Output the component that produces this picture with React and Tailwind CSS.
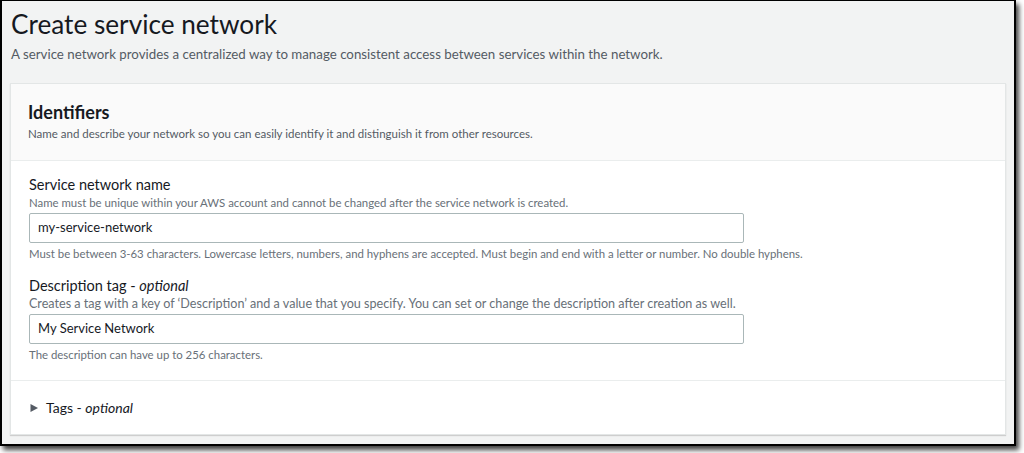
import React from 'react';

const font = { fontFamily: 'Lato, "Open Sans", Arial, sans-serif' };

const Field = ({ label, optional, hint, hintSize, value, note }) => (
  <div className="flex flex-col">
    <div className="text-[14.5px] leading-[18px] text-[#16191f]">
      {label}
      {optional && (
        <>
          {' - '}
          <i>optional</i>
        </>
      )}
    </div>
    <div className={`${hintSize} leading-[16px] text-[#687078] mt-[1px]`}>{hint}</div>
    <div className="mt-[2px] w-[715px] h-[30px] border border-[#aab7b8] rounded-[2px] bg-white px-[8px] flex items-center text-[13px] text-[#16191f]">
      {value}
    </div>
    <div className="text-[11.4px] leading-[16px] text-[#687078] mt-[3px]">{note}</div>
  </div>
);

export default function App() {
  return (
    <div className="w-[1024px] h-[453px] bg-white" style={font}>
      <div className="w-[1016px] h-[446px] border-2 border-t border-black bg-[#f2f3f3] shadow-[3px_4px_5px_rgba(0,0,0,0.75)] px-[8px] flex flex-col">
        <h1 className="text-[26.2px] leading-[34px] text-[#16191f] pl-[1px] mt-[6px]">Create service network</h1>
        <p className="text-[13.3px] leading-[20px] text-[#545b64] pl-[1px] mt-[3px]">
          A service network provides a centralized way to manage consistent access between services within the network.
        </p>
        <div className="mt-[19px] w-[996px] h-[352px] bg-white border border-[#e3e6e6] shadow-[0_1px_1px_rgba(0,0,0,0.15)] flex flex-col">
          <div className="bg-[#fafafa] border-b border-[#eaeded] h-[77px] px-[17px] pt-[17px]">
            <h2 className="text-[18px] leading-[22px] font-bold text-[#16191f]">Identifiers</h2>
            <p className="text-[11.5px] leading-[16px] text-[#545b64] mt-[3px]">
              Name and describe your network so you can easily identify it and distinguish it from other resources.
            </p>
          </div>
          <div className="px-[18px] pt-[15px] flex flex-col gap-[15px] pb-[17px] border-b border-[#eaeded]">
            <Field
              label="Service network name"
              hint="Name must be unique within your AWS account and cannot be changed after the service network is created."
              hintSize="text-[11.4px]"
              value="my-service-network"
              note="Must be between 3-63 characters. Lowercase letters, numbers, and hyphens are accepted. Must begin and end with a letter or number. No double hyphens."
            />
            <Field
              label="Description tag"
              optional
              hint="Creates a tag with a key of ‘Description’ and a value that you specify. You can set or change the description after creation as well."
              hintSize="text-[12.6px]"
              value="My Service Network"
              note="The description can have up to 256 characters."
            />
          </div>
          <div className="flex items-center px-[18px] pt-[16px] text-[14px] text-[#16191f]">
            <svg width="10" height="10" viewBox="0 0 10 10" className="mr-[7px]">
              <path d="M1.5 1 L9 5 L1.5 9 Z" fill="#545b64" />
            </svg>
            <span>
              Tags - <i>optional</i>
            </span>
          </div>
        </div>
      </div>
    </div>
  );
}
